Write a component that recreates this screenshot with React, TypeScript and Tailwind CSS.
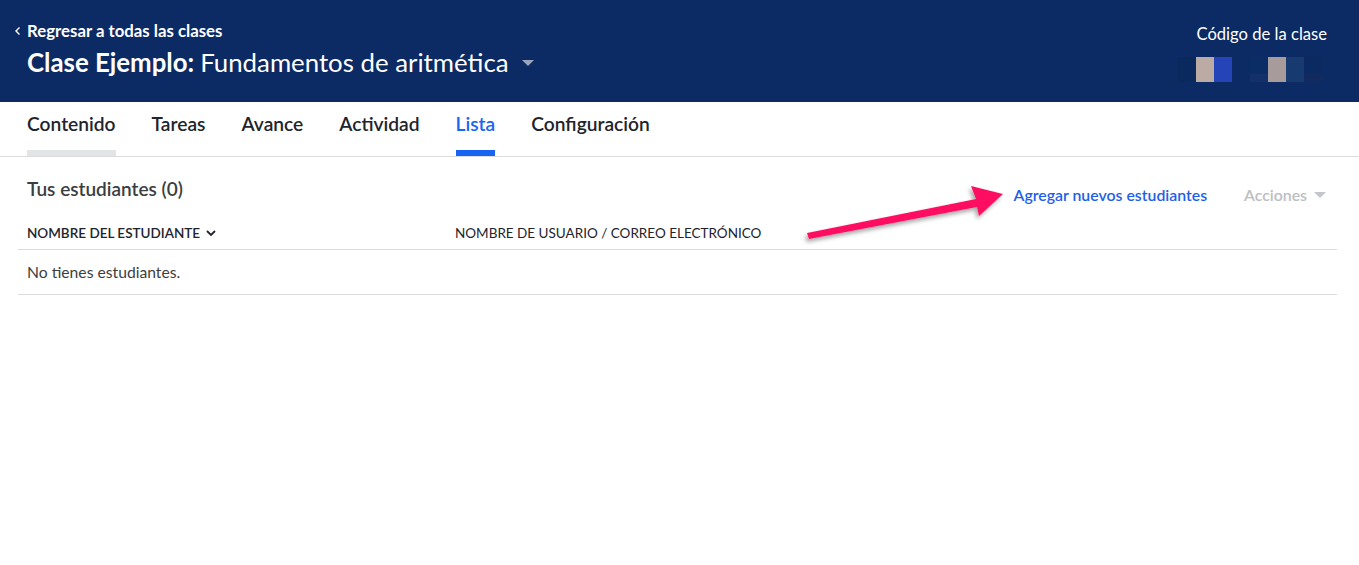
import React from "react";

const tabs = ["Contenido", "Tareas", "Avance", "Actividad", "Lista", "Configuración"];

function Blocks() {
  return (
    <div className="flex mt-[11px] h-[25px]">
      <div className="w-[18px] bg-[#0a2a5e]" />
      <div className="w-[18px] bg-[#bcaaa4]" />
      <div className="w-[18px] bg-[#2444b8]" />
      <div className="w-[18px]" />
      <div className="w-[18px] flex flex-col">
        <div className="h-[17px] bg-[#0a2d66]" />
        <div className="flex-1 bg-[#13306a]" />
      </div>
      <div className="w-[18px] bg-[#a89b9b]" />
      <div className="w-[18px] bg-[#173a70]" />
      <div className="w-[18px] flex flex-col">
        <div className="h-[17px] bg-[#0c2a62]" />
        <div className="flex-1 bg-[#122a5e]" />
      </div>
    </div>
  );
}

export default function App() {
  return (
    <div className="relative w-[1359px] h-[565px] bg-white overflow-hidden" style={{ fontFamily: "Lato, 'Open Sans', sans-serif" }}>
      <header className="h-[102px] bg-[#0c2a63] flex justify-between text-white">
        <div className="pl-[14px] pt-[20px]">
          <div className="flex items-center h-[22px] text-[16.8px] font-bold leading-[22px]">
            <svg width="8" height="10" viewBox="0 0 8 10" className="mr-[5px]">
              <path d="M5.5 1.5 L2 5 L5.5 8.5" fill="none" stroke="white" strokeWidth="1.4" />
            </svg>
            Regresar a todas las clases
          </div>
          <div className="flex items-center mt-[5px] pl-[13px] h-[30px] text-[25.8px] leading-[30px]">
            <span className="font-bold">Clase Ejemplo:</span>
            <span className="ml-[6px]">Fundamentos de aritmética</span>
            <svg width="12" height="7" viewBox="0 0 12 7" className="ml-[13px] mt-[2px]">
              <path d="M0 0 L12 0 L6 6 Z" fill="#9aa4bb" />
            </svg>
          </div>
        </div>
        <div className="pr-[32px] pt-[23px] flex flex-col items-end">
          <div className="text-[16.6px] leading-[23px]">Código de la clase</div>
          <div className="mr-[5px]">
            <Blocks />
          </div>
        </div>
      </header>

      <nav className="h-[55px] border-b border-[#dcdcdc] flex pl-[9px]">
        {tabs.map((t, i) => {
          const active = t === "Lista";
          return (
            <div key={t} className="flex flex-col px-[18px] h-[54px]">
              <div className={`pt-[10px] h-[48px] text-[19.2px] font-semibold leading-[24px] ${active ? "text-[#1865f2]" : "text-[#21242c]"}`}>{t}</div>
              <div className={`h-[6px] ${active ? "bg-[#1865f2]" : i === 0 ? "bg-[#e3e4e5]" : ""}`} />
            </div>
          );
        })}
      </nav>

      <section className="pl-[18px] pr-[22px]">
        <div className="flex items-start justify-between pt-[20px] h-[66px]">
          <div className="pl-[9px] text-[19px] font-semibold leading-[24px] text-[#3b3e40]">Tus estudiantes (0)</div>
          <div className="flex items-center pt-[6px] pr-[11px]">
            <span className="text-[15.85px] font-semibold leading-[24px] text-[#1f5fe8]">Agregar nuevos estudiantes</span>
            <span className="ml-[37px] text-[15.85px] font-semibold leading-[24px] text-[#bcbec2]">Acciones</span>
            <svg width="12" height="7" viewBox="0 0 12 7" className="ml-[7px]">
              <path d="M0 0 L12 0 L6 6 Z" fill="#c4c6ca" />
            </svg>
          </div>
        </div>
        <div className="grid grid-cols-[428px_1fr] h-[27px] border-b border-[#dcdcdc] text-[13.5px] leading-[20px] text-[#21242c]">
          <div className="pl-[9px] flex items-start font-semibold">
            NOMBRE DEL ESTUDIANTE
            <svg width="10" height="7" viewBox="0 0 10 7" className="ml-[6px] mt-[7px]">
              <path d="M1 1 L5 5 L9 1" fill="none" stroke="#21242c" strokeWidth="1.8" />
            </svg>
          </div>
          <div className="pl-[9px]">NOMBRE DE USUARIO / CORREO ELECTRÓNICO</div>
        </div>
        <div className="h-[45px] border-b border-[#dcdcdc] pl-[9px] pt-[11px] text-[15.7px] leading-[22px] text-[#3b3e40]">
          No tienes estudiantes.
        </div>
      </section>

      <svg className="absolute left-0 top-0 pointer-events-none" width="1359" height="565" viewBox="0 0 1359 565">
        <defs>
          <filter id="sh" x="-10%" y="-50%" width="120%" height="200%">
            <feDropShadow dx="-2" dy="3" stdDeviation="2" floodColor="#000" floodOpacity="0.35" />
          </filter>
        </defs>
        <path d="M807 233 L976 199 L971 186 L1003 194 L979 216 L977 207 L809 239 Z" fill="#ff1160" filter="url(#sh)" />
      </svg>
    </div>
  );
}
